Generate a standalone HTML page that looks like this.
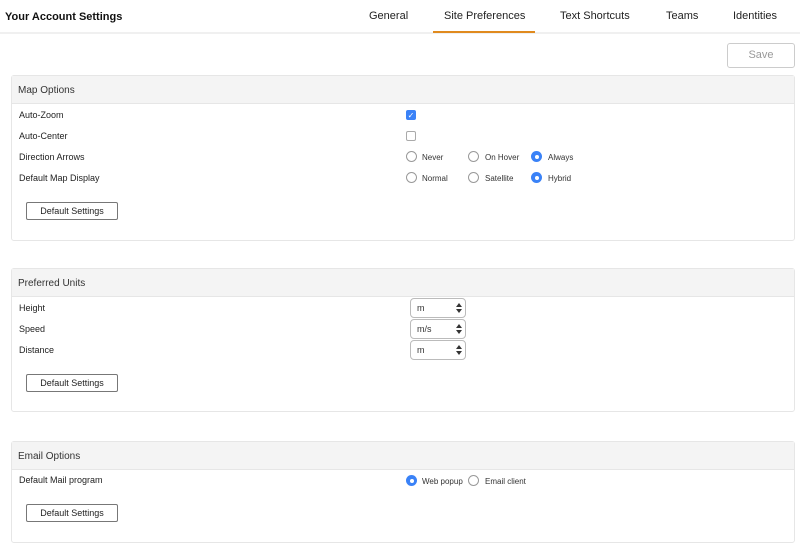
<!DOCTYPE html>
<html><head><meta charset="utf-8"><style>
*{box-sizing:border-box;margin:0;padding:0}
body{width:800px;height:548px;background:#fff;font-family:"Liberation Sans",Arial,sans-serif;color:#222;position:relative;overflow:hidden}
.a{position:absolute}
.hdr{left:0;top:0;width:800px;height:34px;border-bottom:2px solid #f0f0f0}
.title{left:5px;top:11px;font-size:11px;font-weight:bold;color:#111}
.tab{top:10px;font-size:11px;color:#222}
.ul{left:433px;top:31px;width:102px;height:2px;background:#e08a1e}
.save{left:727px;top:43px;width:68px;height:25px;border:1px solid #ccc;border-radius:3px;color:#999;font-size:11px;text-align:center;line-height:23px}
.panel{left:11px;width:784px;border:1px solid #e6e6e6;border-radius:3px;background:#fff}
.ph{left:0;top:0;width:100%;height:28px;background:#f4f4f4;border-bottom:1px solid #e6e6e6;font-size:10px;color:#333;padding:9px 0 0 6px}
.lbl{font-size:9px;color:#222}
.btn{width:92px;height:18px;border:1px solid #777;border-radius:2px;font-size:9px;text-align:center;line-height:16px;color:#222;background:#fff}
.r{width:11px;height:11px;border:1px solid #999;border-radius:50%;background:#fff}
.r.on{border:none;background:#3a82f7}
.r.on::after{content:"";position:absolute;left:3.5px;top:3.5px;width:4px;height:4px;border-radius:50%;background:#fff}
.rl{font-size:8px;color:#333}
.cb{width:10px;height:10px;border:1px solid #aaa;border-radius:2px}
.cb.on{background:#3a82f7;border-color:#3a82f7;color:#fff;font-size:8px;line-height:9px;text-align:center}
.sel{left:410px;width:56px;height:20px;border:1px solid #bbb;border-radius:4px;font-size:9px;color:#333;padding:4px 0 0 6px}
.sel::after{content:"";position:absolute;right:3px;top:4px;border-left:3px solid transparent;border-right:3px solid transparent;border-bottom:4px solid #333}
.sel::before{content:"";position:absolute;right:3px;top:10px;border-left:3px solid transparent;border-right:3px solid transparent;border-top:4px solid #333}
</style></head><body>
<div class="a hdr"></div>
<div class="a title">Your Account Settings</div>
<div class="a tab" style="left:369px">General</div>
<div class="a tab" style="left:444px">Site Preferences</div>
<div class="a tab" style="left:560px">Text Shortcuts</div>
<div class="a tab" style="left:666px">Teams</div>
<div class="a tab" style="left:733px">Identities</div>
<div class="a ul"></div>
<div class="a save">Save</div>

<div class="a panel" style="top:75px;height:166px">
<div class="a ph">Map Options</div>
</div>
<div class="a lbl" style="left:19px;top:110px">Auto-Zoom</div>
<div class="a lbl" style="left:19px;top:131px">Auto-Center</div>
<div class="a lbl" style="left:19px;top:152px">Direction Arrows</div>
<div class="a lbl" style="left:19px;top:173px">Default Map Display</div>
<div class="a cb on" style="left:406px;top:110px">✓</div>
<div class="a cb" style="left:406px;top:131px"></div>
<div class="a r" style="left:406px;top:151px"></div><div class="a rl" style="left:422px;top:153px">Never</div>
<div class="a r" style="left:468px;top:151px"></div><div class="a rl" style="left:485px;top:153px">On Hover</div>
<div class="a r on" style="left:531px;top:151px"></div><div class="a rl" style="left:548px;top:153px">Always</div>
<div class="a r" style="left:406px;top:172px"></div><div class="a rl" style="left:422px;top:174px">Normal</div>
<div class="a r" style="left:468px;top:172px"></div><div class="a rl" style="left:485px;top:174px">Satellite</div>
<div class="a r on" style="left:531px;top:172px"></div><div class="a rl" style="left:548px;top:174px">Hybrid</div>
<div class="a btn" style="left:26px;top:202px">Default Settings</div>

<div class="a panel" style="top:268px;height:144px">
<div class="a ph">Preferred Units</div>
</div>
<div class="a lbl" style="left:19px;top:303px">Height</div>
<div class="a lbl" style="left:19px;top:324px">Speed</div>
<div class="a lbl" style="left:19px;top:345px">Distance</div>
<div class="a sel" style="top:298px">m</div>
<div class="a sel" style="top:319px">m/s</div>
<div class="a sel" style="top:340px">m</div>
<div class="a btn" style="left:26px;top:374px">Default Settings</div>

<div class="a panel" style="top:441px;height:102px">
<div class="a ph">Email Options</div>
</div>
<div class="a lbl" style="left:19px;top:475px">Default Mail program</div>
<div class="a r on" style="left:406px;top:475px"></div><div class="a rl" style="left:422px;top:477px">Web popup</div>
<div class="a r" style="left:468px;top:475px"></div><div class="a rl" style="left:485px;top:477px">Email client</div>
<div class="a btn" style="left:26px;top:504px">Default Settings</div>
</body></html>
